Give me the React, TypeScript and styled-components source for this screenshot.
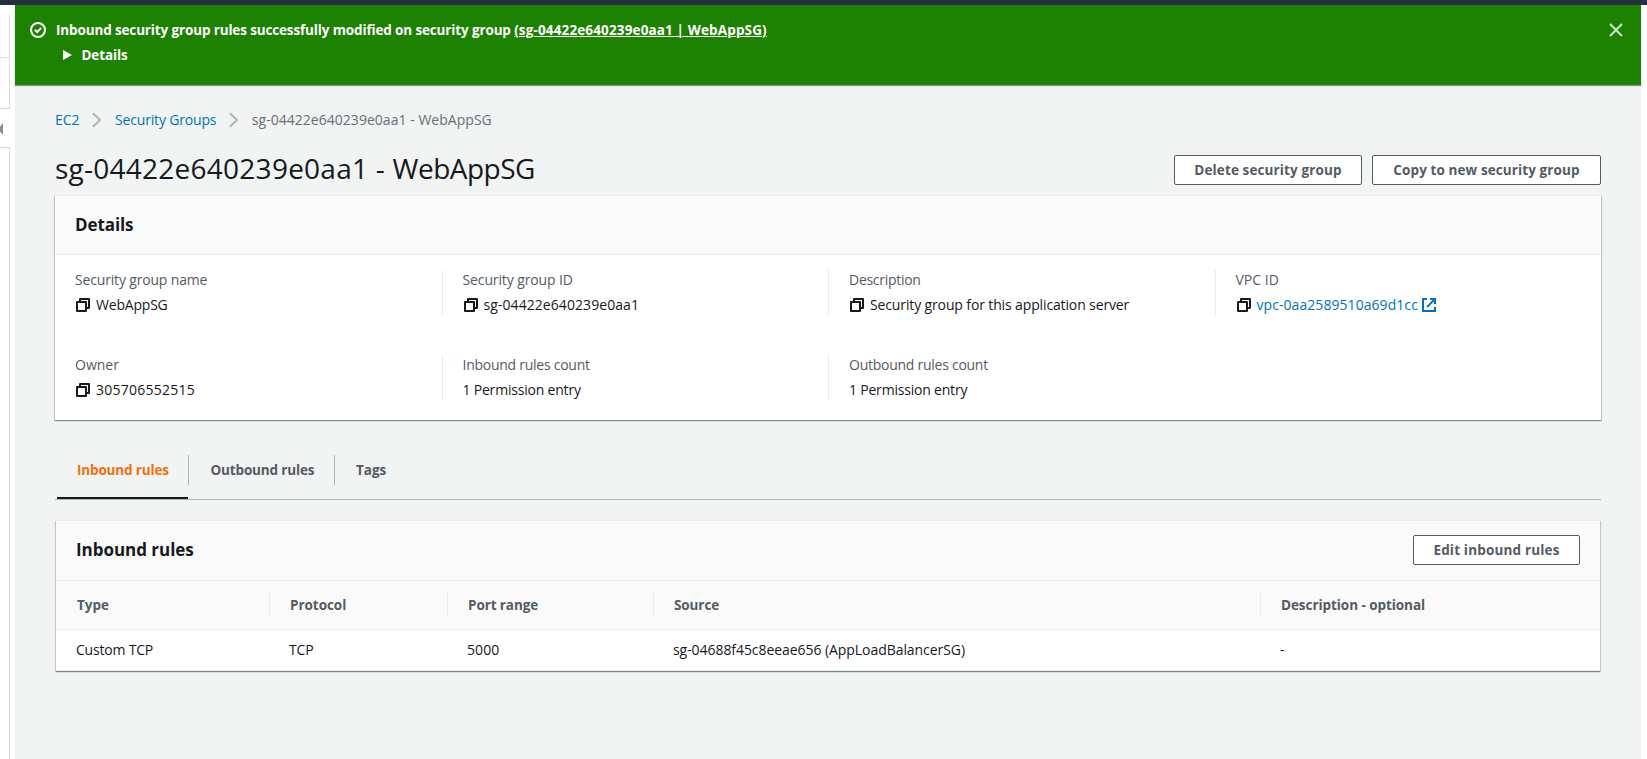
import React from "react";
import styled, { createGlobalStyle } from "styled-components";

const GlobalStyle = createGlobalStyle`
  * { box-sizing: border-box; }
  body {
    margin: 0;
    background: #fff;
    color: #16191f;
    font: 400 14px/20px "Open Sans", "Noto Sans", sans-serif;
    overflow: hidden;
  }
  h1, h2, dl, dd, dt, p { margin: 0; font-weight: inherit; }
`;

/* Letter fitting, in px */
const T = styled.span<{ $fit?: number }>`
  letter-spacing: ${(p) => p.$fit ?? 0}px;
  white-space: pre;
`;

const Screen = styled.div`
  display: flex;
  flex-direction: column;
  width: 100%;
  height: 100vh;
`;

const TopBar = styled.div`
  height: 5px;
  background: #232f3e;
`;

const Body = styled.div`
  flex: 1;
  display: flex;
  padding-right: 6px;
`;

const NavEdge = styled.aside`
  width: 15px;
  display: flex;
  flex-direction: column;
  padding: 10px 5px 0 0;
`;

const NavBox = styled.div<{ $height?: number; $top?: boolean }>`
  ${(p) => (p.$height ? `height: ${p.$height}px;` : "flex: 1;")}
  border-right: 1px solid #dcdcdc;
  border-bottom: ${(p) => (p.$height ? "1px solid #dcdcdc" : "0")};
  border-top: ${(p) => (p.$top ? "1px solid #dcdcdc" : "0")};
`;

const Collapse = styled.div`
  height: 38px;
  padding-top: 14px;
  line-height: 0;
`;

const Main = styled.main`
  flex: 1;
  background: #f2f3f3;
`;

const Flash = styled.div`
  display: flex;
  height: 80px;
  padding: 15px 18px 0 15px;
  background: #1d8102;
  color: #fff;
  font-size: 13.5px;
  font-weight: 700;
  box-shadow: 0 1px 1px 0 rgba(0, 28, 36, 0.45);
`;

const FlashIcon = styled.div`
  width: 16px;
  height: 16px;
  margin-top: 2px;
  line-height: 0;
`;

const FlashBody = styled.div`
  flex: 1;
  padding-left: 10px;
`;

const FlashMessage = styled.div`
  height: 20px;
`;

const FlashLink = styled.a`
  color: #fff;
  letter-spacing: 0.14px;
  text-decoration: underline;
  text-underline-offset: 1px;
  text-decoration-thickness: 1px;
`;

const FlashDetails = styled.div`
  display: flex;
  align-items: center;
  gap: 9.5px;
  margin-top: 5px;
  padding-left: 7px;
`;

const Dismiss = styled.div`
  padding-top: 3px;
  line-height: 0;
`;

const Content = styled.div`
  padding: 25px 40px 0;
`;

const Breadcrumbs = styled.nav`
  display: flex;
  align-items: center;
  height: 20px;
  color: #687078;
  a { color: #0073bb; }
  svg { margin: 0 13px 0 12.5px; }
`;

const TitleRow = styled.div`
  display: flex;
  justify-content: space-between;
  align-items: flex-end;
  margin: 21px 0 10px;
`;

const Title = styled.h1`
  font-size: 28px;
  line-height: 34px;
`;

const Actions = styled.div`
  display: flex;
  gap: 10px;
`;

const Button = styled.button<{ $width: number; $fit: number }>`
  width: ${(p) => p.$width}px;
  height: 30px;
  padding: 0;
  border: 1px solid #545b64;
  border-radius: 2px;
  background: #fff;
  color: #545b64;
  font: 700 13.5px/20px "Open Sans", "Noto Sans", sans-serif;
  letter-spacing: ${(p) => p.$fit}px;
  white-space: nowrap;
`;

const Card = styled.section<{ $inset?: boolean }>`
  margin: 0 ${(p) => (p.$inset ? 1 : 0)}px;
  background: #fff;
  border-top: 1px solid #eaeded;
  box-shadow: 0 1px 1px 0 rgba(0, 28, 36, 0.3), 1px 1px 1px 0 rgba(0, 28, 36, 0.15),
    -1px 1px 1px 0 rgba(0, 28, 36, 0.15);
`;

const CardHeader = styled.header<{ $height: number }>`
  display: flex;
  justify-content: space-between;
  height: ${(p) => p.$height}px;
  padding: 14px 20px 0;
  background: #fafafa;
  border-bottom: 1px solid #eaeded;
`;

const CardTitle = styled.h2<{ $fit: number }>`
  font-size: 17px;
  font-weight: 700;
  line-height: 29px;
  letter-spacing: ${(p) => p.$fit}px;
`;

const Fields = styled.dl`
  display: grid;
  grid-template-columns: repeat(4, 1fr);
  row-gap: 40px;
  padding: 15px 0 20px;
`;

const Field = styled.div<{ $first?: boolean }>`
  height: 45px;
  padding-left: 20px;
  border-left: ${(p) => (p.$first ? "0" : "1px solid #eaeded")};
  dt { color: #545b64; }
`;

const Value = styled.dd`
  display: flex;
  align-items: center;
  height: 20px;
  margin-top: 5px;
  padding-left: 1px;
  color: #16191f;
  svg { flex: none; }
  span { margin-left: 6px; }
  span:first-child { margin-left: -1px; }
  span + svg { margin-left: 4px; }
`;

const LinkText = styled(T)`
  color: #0073bb;
`;

const Tabs = styled.div`
  display: flex;
  height: 65px;
  margin: 15px 0 20px;
  padding-left: 2px;
  border-bottom: 1px solid #aab7b8;
`;

const Tab = styled.div<{ $width: number; $active?: boolean; $pad: number }>`
  width: ${(p) => p.$width}px;
  padding: 25px 0 0 ${(p) => p.$pad}px;
  color: ${(p) => (p.$active ? "#ec7211" : "#545b64")};
  border-bottom: 2px solid ${(p) => (p.$active ? "#16191f" : "transparent")};
  font-size: 13.5px;
  font-weight: 700;
`;

const TabDivider = styled.div`
  width: 1px;
  height: 30px;
  margin-top: 20px;
  background: #aab7b8;
`;

const Row = styled.div<{ $head?: boolean }>`
  display: grid;
  grid-template-columns: 214px 178px 206px 607px 1fr;
  align-items: center;
  height: ${(p) => (p.$head ? 49 : 41)}px;
  background: ${(p) => (p.$head ? "#fafafa" : "#fff")};
  border-bottom: 1px solid #eaeded;
  color: ${(p) => (p.$head ? "#545b64" : "#16191f")};
  font-size: ${(p) => (p.$head ? 13.5 : 14)}px;
  font-weight: ${(p) => (p.$head ? 700 : 400)};
`;

const HeadCell = styled.div`
  height: 24px;
  padding-left: 20px;
  line-height: 24px;
  border-right: 1px solid #eaeded;
  &:first-child { padding-left: 21px; }
  &:last-child { border-right: 0; }
`;

const Cell = styled.div`
  padding-left: 19px;
  &:first-child { padding-left: 20px; }
`;

const CopyIcon = () => (
  <svg width="14" height="14" viewBox="0 0 14 14" fill="none" stroke="#16191f" strokeWidth="2" strokeLinejoin="round">
    <path d="M1 4h9v9H1z" />
    <path d="M4 4V1h9v9h-3" />
  </svg>
);

const ExternalIcon = () => (
  <svg width="14" height="14" viewBox="0 0 14 14" fill="none" stroke="#0073bb" strokeWidth="2">
    <path d="M5 1H1v12h12V9" />
    <path d="M8 1h5v5" />
    <path d="M12.5 1.5L5 9" strokeWidth="1.8" />
  </svg>
);

const Chevron = () => (
  <svg width="10" height="16" viewBox="0 0 10 16" fill="none" stroke="#aab7b8" strokeWidth="2">
    <path d="M1 1.2L8 8L1 14.8" />
  </svg>
);

const fields = [
  { label: "Security group name", lf: -0.17, value: "WebAppSG", vf: -0.2, copy: true },
  { label: "Security group ID", lf: -0.12, value: "sg-04422e640239e0aa1", vf: 0.07, copy: true },
  { label: "Description", lf: -0.28, value: "Security group for this application server", vf: -0.13, copy: true },
  { label: "VPC ID", lf: 0, value: "vpc-0aa2589510a69d1cc", vf: 0.06, copy: true, link: true },
  { label: "Owner", lf: 0, value: "305706552515", vf: 0.24, copy: true },
  { label: "Inbound rules count", lf: -0.26, value: "1 Permission entry", vf: -0.2 },
  { label: "Outbound rules count", lf: -0.26, value: "1 Permission entry", vf: -0.2 },
];

const columns = [
  { name: "Type", nf: 0, value: "Custom TCP", vf: -0.2 },
  { name: "Protocol", nf: -0.05, value: "TCP", vf: -0.17 },
  { name: "Port range", nf: -0.1, value: "5000", vf: 0.1 },
  { name: "Source", nf: -0.1, value: "sg-04688f45c8eeae656 (AppLoadBalancerSG)", vf: -0.06 },
  { name: "Description - optional", nf: -0.06, value: "-", vf: 0 },
];

export default function App() {
  return (
    <Screen>
      <GlobalStyle />
      <TopBar />
      <Body>
        <NavEdge>
          <NavBox $height={43} />
          <NavBox $height={51} />
          <Collapse>
            <svg width="3" height="12" viewBox="0 0 3 12" fill="#8c8c8c">
              <path d="M3 0v12L0 8.5v-5z" />
            </svg>
          </Collapse>
          <NavBox $top />
        </NavEdge>
        <Main>
          <Flash>
            <FlashIcon>
              <svg width="16" height="16" viewBox="0 0 16 16" fill="none" stroke="#fff" strokeWidth="2">
                <circle cx="8" cy="8" r="7" />
                <path d="M4.8 7.8L7.2 10L11.2 5.9" />
              </svg>
            </FlashIcon>
            <FlashBody>
              <FlashMessage>
                <T $fit={-0.14}>{"Inbound security group rules successfully modified on security group "}</T>
                <FlashLink>(sg-04422e640239e0aa1 | WebAppSG)</FlashLink>
              </FlashMessage>
              <FlashDetails>
                <svg width="9" height="10" viewBox="0 0 9 10" fill="#fff">
                  <path d="M0 0l9 5l-9 5z" />
                </svg>
                <T $fit={-0.12}>Details</T>
              </FlashDetails>
            </FlashBody>
            <Dismiss>
              <svg width="14" height="14" viewBox="0 0 14 14" fill="none" stroke="#d5e6d0" strokeWidth="2">
                <path d="M1 1l12 12M13 1L1 13" />
              </svg>
            </Dismiss>
          </Flash>
          <Content>
            <Breadcrumbs>
              <a><T $fit={0}>EC2</T></a>
              <Chevron />
              <a><T $fit={-0.18}>Security Groups</T></a>
              <Chevron />
              <T $fit={0.03}>sg-04422e640239e0aa1 - WebAppSG</T>
            </Breadcrumbs>
            <TitleRow>
              <Title>
                <T $fit={0.25}>{"sg-04422e640239e0aa1 - "}</T>
                <T $fit={-0.5}>WebAppSG</T>
              </Title>
              <Actions>
                <Button $width={188} $fit={0.12}>Delete security group</Button>
                <Button $width={229} $fit={0.1}>Copy to new security group</Button>
              </Actions>
            </TitleRow>
            <Card>
              <CardHeader $height={59}>
                <CardTitle $fit={-0.09}>Details</CardTitle>
              </CardHeader>
              <Fields>
                {fields.map((f, i) => (
                  <Field key={f.label} $first={i % 4 === 0}>
                    <dt><T $fit={f.lf}>{f.label}</T></dt>
                    <Value>
                      {f.copy && <CopyIcon />}
                      {f.link ? <LinkText $fit={f.vf}>{f.value}</LinkText> : <T $fit={f.vf}>{f.value}</T>}
                      {f.link && <ExternalIcon />}
                    </Value>
                  </Field>
                ))}
              </Fields>
            </Card>
            <Tabs>
              <Tab $width={131} $pad={20} $active><T $fit={-0.16}>Inbound rules</T></Tab>
              <TabDivider />
              <Tab $width={145} $pad={21.5}><T $fit={-0.16}>Outbound rules</T></Tab>
              <TabDivider />
              <Tab $width={72} $pad={21}><T>Tags</T></Tab>
            </Tabs>
            <Card $inset>
              <CardHeader $height={60}>
                <CardTitle $fit={-0.03}>Inbound rules</CardTitle>
                <Button $width={167} $fit={0.17}>Edit inbound rules</Button>
              </CardHeader>
              <Row $head>
                {columns.map((c) => (
                  <HeadCell key={c.name}><T $fit={c.nf}>{c.name}</T></HeadCell>
                ))}
              </Row>
              <Row>
                {columns.map((c) => (
                  <Cell key={c.name}><T $fit={c.vf}>{c.value}</T></Cell>
                ))}
              </Row>
            </Card>
          </Content>
        </Main>
      </Body>
    </Screen>
  );
}
